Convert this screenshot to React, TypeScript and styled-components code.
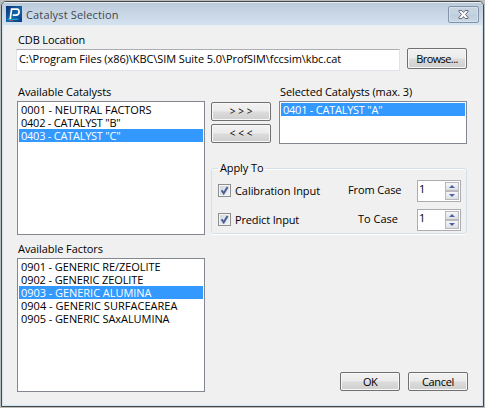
import React from 'react';
import styled, { createGlobalStyle } from 'styled-components';

const GlobalStyle = createGlobalStyle`
  * { box-sizing: border-box; }
  html, body { margin: 0; padding: 0; }
  body {
    background: #b9bcb8;
    color: #000;
    font: 11px/13px "Open Sans", "Noto Sans", sans-serif;
    overflow: hidden;
  }
`;

const Dialog = styled.div`
  width: 483px;
  height: 406px;
  margin: 1px 0 0 1px;
  display: flex;
  flex-direction: column;
  background: #d7e4f2;
  border: 1px solid #454749;
  border-radius: 5px 5px 0 0;
  overflow: hidden;
`;

const TitleBar = styled.header`
  height: 24px;
  flex: none;
  display: flex;
  align-items: flex-start;
  padding: 3px 4px 0 4px;
  background: linear-gradient(#bccbda, #d6e3f1);
  border-top: 1px solid #e9eff5;
  color: #3f474f;
`;

const Title = styled.h1`
  flex: 1;
  margin: 1px 0 0 4px;
  font-size: 11px;
  line-height: 15px;
  font-weight: 400;
  letter-spacing: 0.15px;
`;

const CloseButton = styled.button`
  width: 31px;
  height: 17px;
  padding: 0;
  display: flex;
  align-items: center;
  justify-content: center;
  background: linear-gradient(#c6d4e2 45%, #bdcddd 55%, #cbd9e7);
  border: 1px solid #8393aa;
  border-radius: 2px;
  box-shadow: inset 0 0 0 1px #d3dfeb;
`;

const Client = styled.main`
  flex: 1;
  margin: 0 2px 2px;
  padding: 8px 14px 0 12px;
  background: #f0f0f0;
  outline: 1px solid #e6eff8;
`;

const Text = styled.span<{ $track?: number }>`
  display: block;
  white-space: pre;
  letter-spacing: ${(p) => p.$track ?? 0}px;
`;

const Caption = styled(Text)<{ $indent?: number }>`
  height: 15px;
  padding-left: ${(p) => p.$indent ?? 1}px;
  line-height: 12px;
`;

const LocationRow = styled.div`
  display: flex;
  align-items: flex-start;
  justify-content: space-between;
`;

const PathField = styled.div`
  width: 384px;
  height: 22px;
  padding: 2px 0 0 2px;
  background: #fff;
  border: 1px solid #e2e3ea;
  border-top-color: #abadb3;
`;

const Button = styled.button`
  width: 60px;
  height: 19px;
  padding: 0;
  display: flex;
  align-items: center;
  justify-content: center;
  color: #000;
  font: inherit;
  background: linear-gradient(#f2f2f2, #ebebeb 48%, #dcdcdc 52%, #cfcfcf);
  border: 1px solid #707070;
  border-radius: 2px;
  box-shadow: inset 0 0 0 1px #f8f8f8;
`;

const BrowseButton = styled(Button)`
  height: 21px;
  margin-top: -1px;
`;

const MoveButton = styled(Button)`
  padding-left: 3px;
  font-size: 10px;
  letter-spacing: 2.7px;
`;

const Columns = styled.div`
  display: grid;
  grid-template-columns: 188px 256px;
  column-gap: 6px;
  margin: 15px 0 0 1px;
`;

const ListBox = styled.div<{ $height: number }>`
  height: ${(p) => p.$height}px;
  padding: 1px;
  background: #fff;
  border: 1px solid #828790;
`;

const Option = styled(Text)<{ $selected?: boolean }>`
  height: 13px;
  padding-left: 2px;
  line-height: 13px;
  color: ${(p) => (p.$selected ? '#fff' : '#000')};
  background: ${(p) => (p.$selected ? '#3399ff' : 'transparent')};
`;

const SelectedArea = styled.div`
  display: flex;
  justify-content: space-between;
`;

const MoveButtons = styled.div`
  display: flex;
  flex-direction: column;
  gap: 3px;
  padding-top: 16px;
`;

const SelectedColumn = styled.div`
  width: 188px;
`;

const Group = styled.fieldset`
  height: 73px;
  margin: 17px 0 0;
  min-width: 0;
  padding: 0 5px 0 6px;
  border: 1px solid #d5dfe5;
  border-radius: 3px;
  box-shadow: inset 0 1px 0 #fff, 0 1px 0 #fff;
`;

const Legend = styled.legend`
  height: 15px;
  padding: 0 2px;
  line-height: 13px;
`;

const GroupBody = styled.div`
  display: grid;
  grid-template-columns: 130px 69px 44px;
  grid-template-rows: 22px 22px;
  row-gap: 7px;
  padding-top: 4px;
`;

const CheckLabel = styled.label`
  display: flex;
  gap: 4px;
  padding-top: 4px;
`;

const Case = styled(Text)<{ $indent: number }>`
  padding: 3px 0 0 ${(p) => p.$indent}px;
`;

const CheckBox = styled.span`
  width: 13px;
  height: 13px;
  display: flex;
  background: linear-gradient(135deg, #cfd4db, #f4f5f6);
  border: 1px solid #8e8f8f;
  box-shadow: inset 0 0 0 1px #f4f4f4;
`;

const Spinner = styled.div`
  height: 22px;
  display: flex;
  justify-content: space-between;
  padding: 1px;
  background: #fff;
  border: 1px solid #abadb3;
`;

const SpinButtons = styled.div`
  width: 14px;
  display: grid;
  grid-template-rows: 9px 9px;
`;

const SpinButton = styled.span`
  display: flex;
  align-items: center;
  justify-content: center;
  background: linear-gradient(#f6f6f6, #dedfe2);
  border: 1px solid #b9b9bd;
`;

const Footer = styled.footer`
  display: flex;
  align-items: flex-end;
  justify-content: space-between;
  margin: 8px 0 0 1px;
`;

const FactorColumn = styled.div`
  width: 188px;
`;

const FooterButtons = styled.div`
  display: flex;
  gap: 8px;
  margin: 0 -1px 1px 0;
`;

const AppIcon = () => (
  <svg width="16" height="16" viewBox="0 0 16 16">
    <defs>
      <linearGradient id="tile" x1="0" y1="0" x2="1" y2="1">
        <stop offset="0" stopColor="#0b2c78" />
        <stop offset=".55" stopColor="#1267a8" />
        <stop offset="1" stopColor="#093581" />
      </linearGradient>
    </defs>
    <path fill="url(#tile)" d="M0 0h16v16H0z" />
    <path d="M1.5 13.2h11" stroke="#22b6d5" />
    <path d="M4.2 13 5.6 3.2H11c3.2 0 2.6 6-.8 6H6.8" fill="none" stroke="#fff" strokeWidth="1.7" />
    <path d="M3 14.5h4" stroke="#d04050" strokeWidth=".8" />
  </svg>
);

const CloseIcon = () => (
  <svg width="11" height="9" viewBox="0 0 12 10">
    <path
      d="M1 .5h3.2L6 2.7 7.8.5H11v1.3L8.2 5 11 8.2v1.3H7.8L6 7.3 4.2 9.5H1V8.2L3.8 5 1 1.8z"
      fill="#fff"
      stroke="#535666"
    />
  </svg>
);

const Check = () => (
  <CheckBox>
    <svg width="11" height="11" viewBox="0 0 11 11">
      <path d="M2.6 5.2 4.7 8.3 8.6 1.9" fill="none" stroke="#4a5f97" strokeWidth="2" />
    </svg>
  </CheckBox>
);

const CaseSpinner = ({ value }: { value: number }) => (
  <Spinner>
    <Text>{value}</Text>
    <SpinButtons>
      <SpinButton>
        <svg width="6" height="3" viewBox="0 0 6 3"><path d="M3 0 6 3H0z" fill="#4c63ac" /></svg>
      </SpinButton>
      <SpinButton>
        <svg width="6" height="3" viewBox="0 0 6 3"><path d="M3 3 6 0H0z" fill="#4c63ac" /></svg>
      </SpinButton>
    </SpinButtons>
  </Spinner>
);

type Entry = { label: string; track: number; selected?: boolean };

const catalysts: Entry[] = [
  { label: '0001 - NEUTRAL FACTORS', track: -0.08 },
  { label: '0402 - CATALYST "B"', track: -0.24 },
  { label: '0403 - CATALYST "C"', track: -0.24, selected: true },
];

const chosen: Entry[] = [{ label: '0401 - CATALYST "A"', track: -0.24, selected: true }];

const factors: Entry[] = [
  { label: '0901 - GENERIC RE/ZEOLITE', track: -0.08 },
  { label: '0902 - GENERIC ZEOLITE', track: -0.1 },
  { label: '0903 - GENERIC ALUMINA', track: -0.05, selected: true },
  { label: '0904 - GENERIC SURFACEAREA', track: 0.02 },
  { label: '0905 - GENERIC SAxALUMINA', track: -0.07 },
];

const List = ({ entries, height }: { entries: Entry[]; height: number }) => (
  <ListBox $height={height}>
    {entries.map((e) => (
      <Option key={e.label} $track={e.track} $selected={e.selected}>{e.label}</Option>
    ))}
  </ListBox>
);

export default function App() {
  return (
    <>
      <GlobalStyle />
      <Dialog>
        <TitleBar>
          <AppIcon />
          <Title>Catalyst Selection</Title>
          <CloseButton aria-label="Close"><CloseIcon /></CloseButton>
        </TitleBar>
        <Client>
          <Caption $indent={2} $track={-0.13}>CDB Location</Caption>
          <LocationRow>
            <PathField>
              <Text $track={-0.08}>{'C:\\Program Files (x86)\\KBC\\SIM Suite 5.0\\ProfSIM\\fccsim\\kbc.cat'}</Text>
            </PathField>
            <BrowseButton><Text $track={-0.6}>Browse...</Text></BrowseButton>
          </LocationRow>
          <Columns>
            <div>
              <Caption $track={-0.07}>Available Catalysts</Caption>
              <List entries={catalysts} height={134} />
            </div>
            <div>
              <SelectedArea>
                <MoveButtons>
                  <MoveButton>&gt;&gt;&gt;</MoveButton>
                  <MoveButton>&lt;&lt;&lt;</MoveButton>
                </MoveButtons>
                <SelectedColumn>
                  <Caption $track={-0.12}>Selected Catalysts (max. 3)</Caption>
                  <List entries={chosen} height={43} />
                </SelectedColumn>
              </SelectedArea>
              <Group>
                <Legend><Text $track={-0.1}>Apply To</Text></Legend>
                <GroupBody>
                  <CheckLabel><Check /><Text $track={-0.06}>Calibration Input</Text></CheckLabel>
                  <Case $indent={0} $track={-0.1}>From Case</Case>
                  <CaseSpinner value={1} />
                  <CheckLabel><Check /><Text $track={-0.15}>Predict Input</Text></CheckLabel>
                  <Case $indent={10} $track={0}>To Case</Case>
                  <CaseSpinner value={1} />
                </GroupBody>
              </Group>
            </div>
          </Columns>
          <Footer>
            <FactorColumn>
              <Caption $track={-0.07}>Available Factors</Caption>
              <List entries={factors} height={134} />
            </FactorColumn>
            <FooterButtons>
              <Button><Text $track={-0.6}>OK</Text></Button>
              <Button><Text $track={-0.3}>Cancel</Text></Button>
            </FooterButtons>
          </Footer>
        </Client>
      </Dialog>
    </>
  );
}
